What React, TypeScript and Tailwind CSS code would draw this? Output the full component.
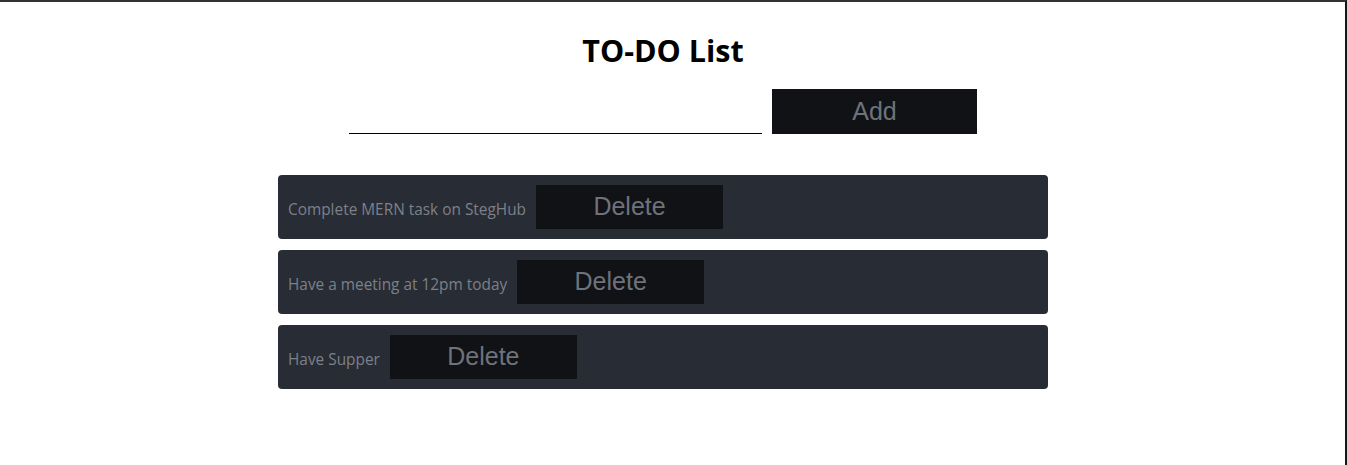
import {useState} from "react";

type Todo = {
    id: number;
    action: string;
};

const initialTodos: Todo[] = [
    {id: 1, action: "Complete MERN task on StegHub"},
    {id: 2, action: "Have a meeting at 12pm today"},
    {id: 3, action: "Have Supper"},
];

const TodoItem = ({todo, onDelete}: { todo: Todo; onDelete: (id: number) => void }) => (
    <li className="flex items-baseline gap-[10px] rounded bg-[#282c34] p-[10px]">
        <span className="text-[15.4px] text-[#7c8089] font-['Open_Sans',sans-serif]">{todo.action}</span>
        <button
            onClick={() => onDelete(todo.id)}
            className="h-[44px] w-[187px] bg-[#111215] text-[25px] text-[#6e727b] font-['Liberation_Sans',Arial,sans-serif]"
        >
            Delete
        </button>
    </li>
);

export default function App() {
    const [todos, setTodos] = useState<Todo[]>(initialTodos);
    const [action, setAction] = useState("");

    const addTodo = () => {
        if (!action.trim()) return;
        setTodos([...todos, {id: Date.now(), action}]);
        setAction("");
    };

    const deleteTodo = (id: number) => {
        setTodos(todos.filter((t) => t.id !== id));
    };

    return (
        <div className="min-h-[465px] w-full border-t-2 border-r-2 border-t-[#333333] border-r-[#141618] bg-white">
            <div className="pr-[19px]">
                <div className="mx-auto w-[770px] pt-[29px]">
                    <h1 className="text-center text-[30.5px] font-bold leading-[38px] text-black font-['Open_Sans',sans-serif]">
                        TO-DO List
                    </h1>
                    {/* input + add */}
                    <div className="mt-[20px] flex items-end justify-center gap-[10px]">
                        <input
                            type="text"
                            value={action}
                            onChange={(e) => setAction(e.target.value)}
                            className="h-[30px] w-[413px] border-b border-black bg-transparent outline-none"
                        />
                        <button
                            onClick={addTodo}
                            className="h-[45px] w-[205px] bg-[#111215] text-[25px] text-[#6e727b] font-['Liberation_Sans',Arial,sans-serif]"
                        >
                            Add
                        </button>
                    </div>
                    <ul className="mt-[41px] flex flex-col gap-[11px]">
                        {todos.map((todo) => (
                            <TodoItem key={todo.id} todo={todo} onDelete={deleteTodo}/>
                        ))}
                    </ul>
                </div>
            </div>
        </div>
    );
}
